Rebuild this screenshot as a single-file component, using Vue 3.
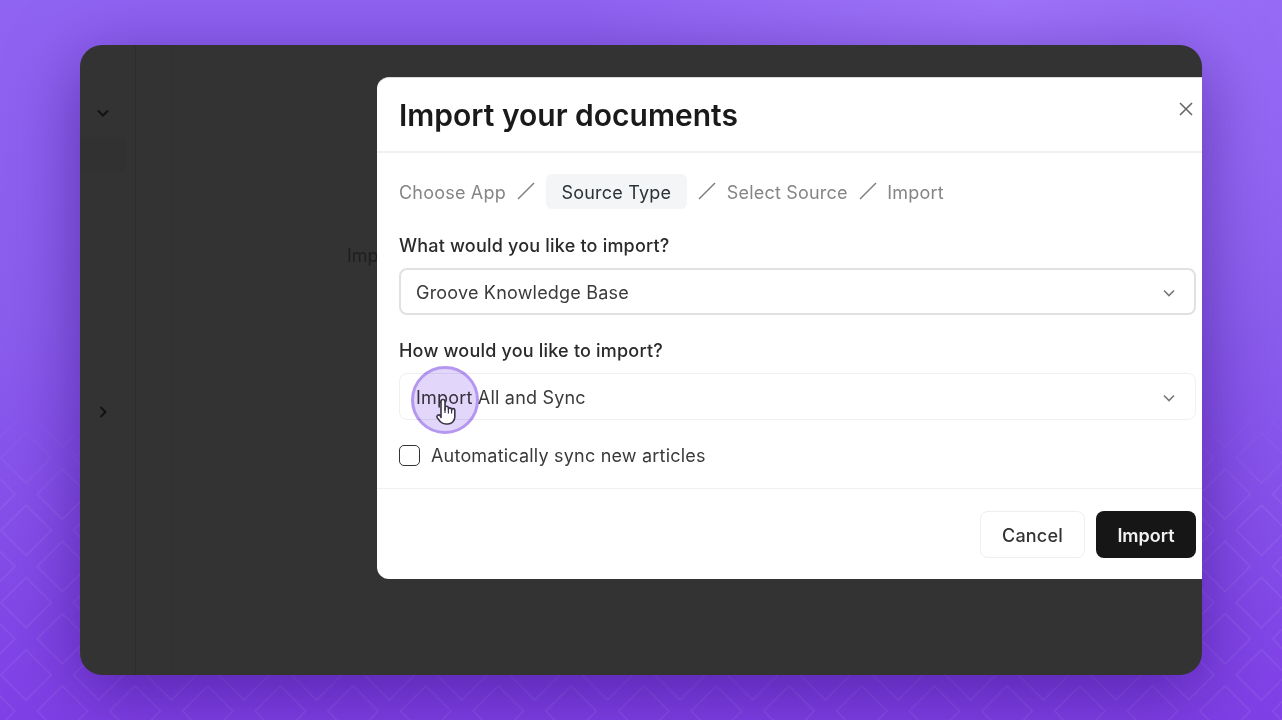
<template>
  <div class="page">
    <svg class="pattern" width="1282" height="720">
      <defs>
        <pattern id="diamonds" width="72.67" height="72.3" viewBox="0 0 72 72" preserveAspectRatio="none" patternUnits="userSpaceOnUse" x="-10.3" y="-11.95">
          <path class="diamond" d="M36 11 L61 36 L36 61 L11 36 Z" />
          <path class="diamond" d="M72 47 L97 72 L72 97 L47 72 Z" />
          <path class="diamond" d="M0 47 L25 72 L0 97 L-25 72 Z" />
          <path class="diamond" d="M72 -25 L97 0 L72 25 L47 0 Z" />
          <path class="diamond" d="M0 -25 L25 0 L0 25 L-25 0 Z" />
        </pattern>
        <linearGradient id="fade" x1="0" y1="0" x2="0" y2="1">
          <stop offset="0.54" stop-color="#fff" stop-opacity="0" />
          <stop offset="0.7" stop-color="#fff" stop-opacity="1" />
        </linearGradient>
        <mask id="fadeMask">
          <rect width="1282" height="720" fill="url(#fade)" />
        </mask>
      </defs>
      <rect width="1282" height="720" fill="url(#diamonds)" mask="url(#fadeMask)" />
    </svg>

    <div class="card">
      <aside class="rail">
        <svg class="chev first" width="16" height="16" viewBox="0 0 16 16"><path d="M3 5.5 L8 10.5 L13 5.5" /></svg>
        <div class="rail-item"></div>
        <svg class="chev second" width="16" height="16" viewBox="0 0 16 16"><path d="M5.5 3 L10.5 8 L5.5 13" /></svg>
      </aside>
      <div class="subnav"></div>
      <main class="content">
        <p class="behind">Import</p>
      </main>

      <section class="modal">
        <header class="modal-head">
          <h1>Import your documents</h1>
          <svg class="close" width="16" height="16" viewBox="0 0 16 16"><path d="M2 2 L14 14 M14 2 L2 14" /></svg>
        </header>

        <div class="modal-body">
          <nav class="crumbs">
            <template v-for="(step, i) in steps" :key="step">
              <span class="crumb" :class="{ active: step === 'Source Type' }">{{ step }}</span>
              <svg v-if="i < steps.length - 1" class="slash" width="18" height="18" viewBox="0 0 18 18"><path d="M1 17 L17 1" /></svg>
            </template>
          </nav>

          <label class="field-label first-label">What would you like to import?</label>
          <div class="select focused">
            <span>Groove Knowledge Base</span>
            <svg class="select-chev" width="14" height="14" viewBox="0 0 14 14"><path d="M2 4.5 L7 9.5 L12 4.5" /></svg>
          </div>

          <label class="field-label second-label">How would you like to import?</label>
          <div class="select">
            <span>Import All and Sync</span>
            <svg class="select-chev" width="14" height="14" viewBox="0 0 14 14"><path d="M2 4.5 L7 9.5 L12 4.5" /></svg>
          </div>

          <div class="check-row">
            <span class="checkbox"></span>
            <span>Automatically sync new articles</span>
          </div>
        </div>

        <footer class="modal-foot">
          <button class="btn cancel">Cancel</button>
          <button class="btn primary">Import</button>
        </footer>
      </section>

      <div class="cursor">
        <svg class="hand" width="24" height="27" viewBox="0 0 24 27">
          <path class="hand-fill" d="M6 3.5a2 2 0 0 1 4 0V12l0-2.5a1.8 1.8 0 0 1 3.4 0V11a1.7 1.7 0 0 1 3.2 0v1.2a1.6 1.6 0 0 1 3.2 0V19a7 7 0 0 1-7 7h-2c-2.6 0-4-.8-5.4-2.2l-3.2-4a1.9 1.9 0 0 1 2.8-2.5L6 19.5Z" />
          <path class="hand-line" d="M10 10v5 M13.4 11v4.5 M16.6 12v3.5" />
        </svg>
      </div>
    </div>
  </div>
</template>

<script setup>
const steps = ["Choose App", "Source Type", "Select Source", "Import"];
</script>

<style>
html,
body {
  margin: 0;
  background: #8a5cf0;
}
</style>

<style scoped>
.page {
  position: relative;
  width: 1282px;
  height: 720px;
  box-sizing: border-box;
  padding: 45px 80px;
  overflow: hidden;
  font-family: Inter, "Liberation Sans", sans-serif;
  background: radial-gradient(circle at 78% 0%, #9f75fb 0, rgba(159, 117, 251, 0) 420px),
    linear-gradient(180deg, #9064f2 0%, #8b5ded 45%, #7f40e6 100%);
}
.pattern {
  position: absolute;
  left: 0;
  top: 0;
}
.diamond {
  fill: none;
  stroke: rgba(255, 255, 255, 0.075);
  stroke-width: 1.5;
}
.card {
  position: relative;
  display: flex;
  height: 630px;
  background: #333333;
  border-radius: 22px;
  overflow: hidden;
  box-shadow: 0 16px 70px rgba(50, 10, 120, 0.55);
}
.rail {
  width: 55px;
  flex: none;
  border-right: 1px solid #2e2e2e;
  display: flex;
  flex-direction: column;
}
.chev path {
  fill: none;
  stroke: #111;
  stroke-width: 2;
}
.chev {
  margin-left: 15px;
  flex: none;
}
.chev.first {
  margin-top: 60px;
}
.chev.second {
  margin-top: 231px;
}
.rail-item {
  width: 46px;
  height: 36px;
  margin-top: 16px;
  background: #313131;
  border-radius: 0 6px 6px 0;
}
.subnav {
  width: 35px;
  flex: none;
  border-right: 1px solid #313131;
}
.content {
  flex: 1;
  padding: 200px 0 0 175px;
}
.behind {
  margin: 0;
  font-size: 18px;
  line-height: 22px;
  color: #1e1e1e;
}
.modal {
  position: absolute;
  left: 297px;
  top: 32px;
  width: 841px;
  height: 502px;
  box-sizing: border-box;
  background: #ffffff;
  border-radius: 12px;
  border-top: 1px solid #d9d9d9;
  display: flex;
  flex-direction: column;
  font-size: 18px;
  letter-spacing: 0.2px;
}
.modal-head {
  height: 75px;
  flex: none;
  box-sizing: border-box;
  padding: 0 22px;
  border-bottom: 2px solid #f1f1f1;
  display: flex;
  align-items: center;
  position: relative;
}
.modal-head h1 {
  margin: 0;
  font-size: 30px;
  font-weight: 600;
  letter-spacing: 0;
  color: #1a1a1a;
}
.close {
  position: absolute;
  left: 801px;
  top: 23px;
}
.close path {
  fill: none;
  stroke: #666;
  stroke-width: 1.6;
}
.modal-body {
  flex: 1;
  padding: 20px 22px 0;
  display: flex;
  flex-direction: column;
}
.crumbs {
  display: flex;
  align-items: center;
  gap: 10.8px;
  height: 36px;
  color: #858585;
}
.crumb {
  padding-top: 2px;
}
.crumb.active {
  padding: 8px 16px 6px;
  background: #f3f5f6;
  border-radius: 6px;
  color: #2c3136;
}
.slash {
  flex: none;
}
.slash path {
  fill: none;
  stroke: #7c7c7c;
  stroke-width: 1.5;
}
.field-label {
  display: block;
  font-weight: 500;
  line-height: 22px;
  color: #2a2a2a;
}
.first-label {
  margin-top: 26px;
}
.second-label {
  margin-top: 25px;
}
.select {
  margin-top: 11px;
  width: 797px;
  height: 47px;
  box-sizing: border-box;
  padding: 2px 19px 0 16px;
  border: 1px solid #f0f0f0;
  border-radius: 8px;
  display: flex;
  align-items: center;
  justify-content: space-between;
  color: #3a3a3a;
}
.select.focused {
  border: 2px solid #e1e1e1;
  padding: 2px 18px 0 15px;
}
.select-chev path {
  fill: none;
  stroke: #777;
  stroke-width: 1.6;
}
.check-row {
  margin-top: 25px;
  display: flex;
  align-items: center;
  gap: 11px;
  color: #3a3a3a;
}
.checkbox {
  width: 21px;
  height: 21px;
  box-sizing: border-box;
  border: 1.5px solid #333;
  border-radius: 5px;
}
.modal-foot {
  height: 91px;
  flex: none;
  box-sizing: border-box;
  padding: 22px 22px 0 0;
  border-top: 1px solid #f1f1f1;
  display: flex;
  justify-content: flex-end;
  align-items: flex-start;
  gap: 11px;
}
.btn {
  height: 47px;
  padding: 2px 6px 0;
  font-family: inherit;
  font-size: 18px;
  font-weight: 500;
  border-radius: 8px;
}
.cancel {
  width: 105px;
  background: #fff;
  border: 1.5px solid #eeeeee;
  color: #333;
  letter-spacing: 0.2px;
}
.primary {
  width: 100px;
  background: #161616;
  border: 0;
  color: #f2f2f2;
  font-weight: 600;
}
.cursor {
  position: absolute;
  left: 331px;
  top: 321px;
  width: 68px;
  height: 68px;
}
.cursor::before {
  content: "";
  position: absolute;
  inset: 0;
  box-sizing: border-box;
  border: 3.5px solid #b497ee;
  border-radius: 50%;
  background: rgba(176, 140, 245, 0.36);
  mix-blend-mode: multiply;
}
.hand {
  position: absolute;
  left: 24px;
  top: 32px;
}
.hand-fill {
  fill: #fff;
  stroke: #3a3346;
  stroke-width: 1.6;
  stroke-linejoin: round;
}
.hand-line {
  fill: none;
  stroke: #3a3346;
  stroke-width: 1.2;
}
</style>
